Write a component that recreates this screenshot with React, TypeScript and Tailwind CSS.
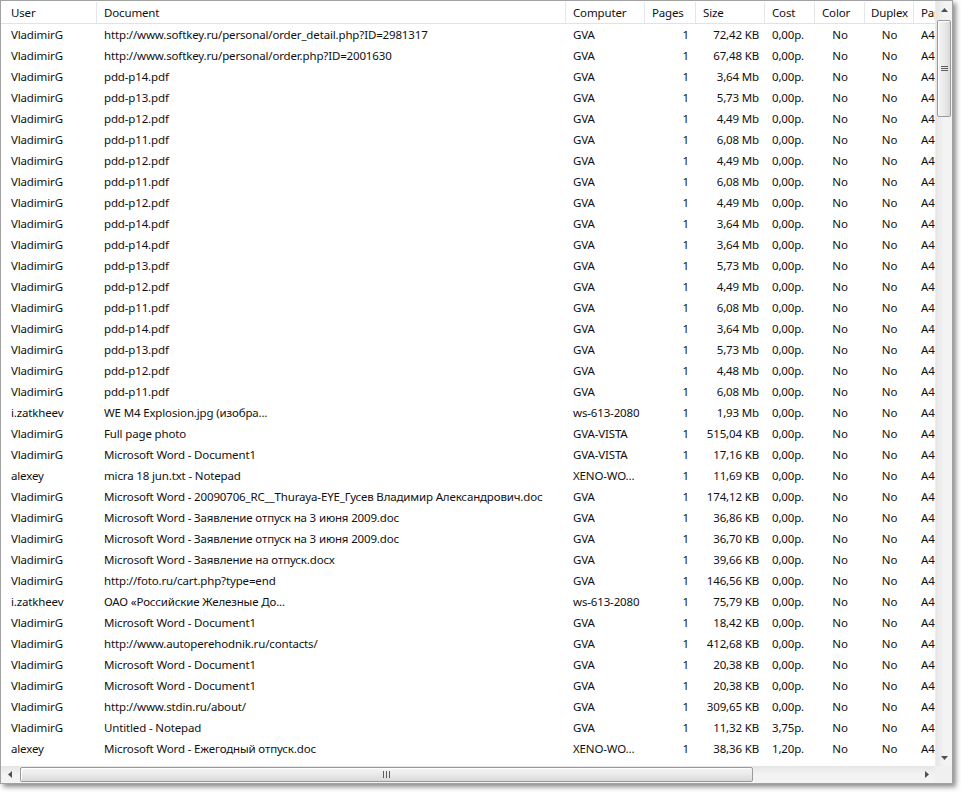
import React from "react";

type Row = [string, string, string, string, string, string];

const rows: Row[] = [
  ["VladimirG", "http://www.softkey.ru/personal/order_detail.php?ID=2981317", "GVA", "1", "72,42 KB", "0,00р."],
  ["VladimirG", "http://www.softkey.ru/personal/order.php?ID=2001630", "GVA", "1", "67,48 KB", "0,00р."],
  ["VladimirG", "pdd-p14.pdf", "GVA", "1", "3,64 Mb", "0,00р."],
  ["VladimirG", "pdd-p13.pdf", "GVA", "1", "5,73 Mb", "0,00р."],
  ["VladimirG", "pdd-p12.pdf", "GVA", "1", "4,49 Mb", "0,00р."],
  ["VladimirG", "pdd-p11.pdf", "GVA", "1", "6,08 Mb", "0,00р."],
  ["VladimirG", "pdd-p12.pdf", "GVA", "1", "4,49 Mb", "0,00р."],
  ["VladimirG", "pdd-p11.pdf", "GVA", "1", "6,08 Mb", "0,00р."],
  ["VladimirG", "pdd-p12.pdf", "GVA", "1", "4,49 Mb", "0,00р."],
  ["VladimirG", "pdd-p14.pdf", "GVA", "1", "3,64 Mb", "0,00р."],
  ["VladimirG", "pdd-p14.pdf", "GVA", "1", "3,64 Mb", "0,00р."],
  ["VladimirG", "pdd-p13.pdf", "GVA", "1", "5,73 Mb", "0,00р."],
  ["VladimirG", "pdd-p12.pdf", "GVA", "1", "4,49 Mb", "0,00р."],
  ["VladimirG", "pdd-p11.pdf", "GVA", "1", "6,08 Mb", "0,00р."],
  ["VladimirG", "pdd-p14.pdf", "GVA", "1", "3,64 Mb", "0,00р."],
  ["VladimirG", "pdd-p13.pdf", "GVA", "1", "5,73 Mb", "0,00р."],
  ["VladimirG", "pdd-p12.pdf", "GVA", "1", "4,48 Mb", "0,00р."],
  ["VladimirG", "pdd-p11.pdf", "GVA", "1", "6,08 Mb", "0,00р."],
  ["i.zatkheev", "WE M4 Explosion.jpg (изобра...", "ws-613-2080", "1", "1,93 Mb", "0,00р."],
  ["VladimirG", "Full page photo", "GVA-VISTA", "1", "515,04 KB", "0,00р."],
  ["VladimirG", "Microsoft Word - Document1", "GVA-VISTA", "1", "17,16 KB", "0,00р."],
  ["alexey", "micra 18 jun.txt - Notepad", "XENO-WO...", "1", "11,69 KB", "0,00р."],
  ["VladimirG", "Microsoft Word - 20090706_RC__Thuraya-EYE_Гусев Владимир Александрович.doc", "GVA", "1", "174,12 KB", "0,00р."],
  ["VladimirG", "Microsoft Word - Заявление отпуск на 3 июня 2009.doc", "GVA", "1", "36,86 KB", "0,00р."],
  ["VladimirG", "Microsoft Word - Заявление отпуск на 3 июня 2009.doc", "GVA", "1", "36,70 KB", "0,00р."],
  ["VladimirG", "Microsoft Word - Заявление на отпуск.docx", "GVA", "1", "39,66 KB", "0,00р."],
  ["VladimirG", "http://foto.ru/cart.php?type=end", "GVA", "1", "146,56 KB", "0,00р."],
  ["i.zatkheev", "ОАО «Российские Железные До...", "ws-613-2080", "1", "75,79 KB", "0,00р."],
  ["VladimirG", "Microsoft Word - Document1", "GVA", "1", "18,42 KB", "0,00р."],
  ["VladimirG", "http://www.autoperehodnik.ru/contacts/", "GVA", "1", "412,68 KB", "0,00р."],
  ["VladimirG", "Microsoft Word - Document1", "GVA", "1", "20,38 KB", "0,00р."],
  ["VladimirG", "Microsoft Word - Document1", "GVA", "1", "20,38 KB", "0,00р."],
  ["VladimirG", "http://www.stdin.ru/about/", "GVA", "1", "309,65 KB", "0,00р."],
  ["VladimirG", "Untitled - Notepad", "GVA", "1", "11,32 KB", "3,75р."],
  ["alexey", "Microsoft Word - Ежегодный отпуск.doc", "XENO-WO...", "1", "38,36 KB", "1,20р."],
  ["VladimirG", "Hiking - Mon 20 Jul 2009.pdf", "GVA", "1", "55,50 KB", "0,40р."],
];

function HeaderCell({ w, label, last }: { w: string; label: string; last?: boolean }) {
  return (
    <div
      className={`${w} shrink-0 h-full leading-[21px] overflow-hidden whitespace-nowrap ${
        last ? "" : "border-r border-[#e3e6ea]"
      }`}
    >
      {label}
    </div>
  );
}

function VScroll() {
  return (
    <div className="w-[17px] h-full flex flex-col bg-gradient-to-r from-[#e6e6e6] via-[#f3f3f3] to-[#f3f3f3] border-l border-[#ececec]">
      <div className="h-[17px] flex items-center justify-center">
        <svg width="7" height="4" viewBox="0 0 7 4">
          <path d="M0 4 L3.5 0 L7 4 Z" fill="#505050" />
        </svg>
      </div>
      <div className="h-[97px] mx-[1px] mt-[2px] rounded-[2px] border border-[#9a9a9a] bg-gradient-to-r from-[#f4f4f4] via-[#eaeaea] to-[#d9d9d9] flex flex-col items-center justify-center gap-[1px] shadow-[inset_1px_1px_0_#ffffff]">
        <div className="w-[7px] h-[1px] bg-[#5e5e5e]" />
        <div className="w-[7px] h-[1px] bg-[#5e5e5e]" />
        <div className="w-[7px] h-[1px] bg-[#5e5e5e]" />
      </div>
      <div className="flex-1" />
      <div className="h-[17px] flex items-center justify-center">
        <svg width="7" height="4" viewBox="0 0 7 4">
          <path d="M0 0 L7 0 L3.5 4 Z" fill="#505050" />
        </svg>
      </div>
    </div>
  );
}

function HScroll() {
  return (
    <div className="h-[17px] flex bg-gradient-to-b from-[#e6e6e6] via-[#f3f3f3] to-[#f3f3f3]">
      <div className="w-[17px] h-full flex items-center justify-center">
        <svg width="4" height="7" viewBox="0 0 4 7">
          <path d="M4 0 L4 7 L0 3.5 Z" fill="#505050" />
        </svg>
      </div>
      <div className="w-[733px] my-[1px] ml-[2px] rounded-[2px] border border-[#9a9a9a] bg-gradient-to-b from-[#f4f4f4] via-[#eaeaea] to-[#d9d9d9] flex items-center justify-center gap-[1px] shadow-[inset_1px_1px_0_#ffffff]">
        <div className="w-[1px] h-[7px] bg-[#5e5e5e]" />
        <div className="w-[1px] h-[7px] bg-[#5e5e5e] ml-[1px]" />
        <div className="w-[1px] h-[7px] bg-[#5e5e5e] ml-[1px]" />
      </div>
      <div className="flex-1" />
      <div className="w-[17px] h-full flex items-center justify-center">
        <svg width="4" height="7" viewBox="0 0 4 7">
          <path d="M0 0 L4 3.5 L0 7 Z" fill="#505050" />
        </svg>
      </div>
      <div className="w-[17px] h-full bg-[#f0f0f0]" />
    </div>
  );
}

export default function App() {
  return (
    <div
      className="w-[961px] h-[792px] bg-white text-[11.5px] tracking-[-0.15px] text-[#111111] overflow-hidden"
      style={{ fontFamily: '"Noto Sans", "Open Sans", sans-serif' }}
    >
      <div className="w-[953px] h-[784px] border border-[#a2a2a2] bg-white flex flex-col shadow-[3px_3px_5px_rgba(0,0,0,0.45)]">
        <div className="flex-1 flex min-h-0">
          <div className="flex-1 min-w-0 flex flex-col overflow-hidden">
            <div className="h-[23px] flex shrink-0 border-b border-[#dfe2e6] pt-[1px]">
              <HeaderCell w="w-[96px] pl-[10px]" label="User" />
              <HeaderCell w="w-[469px] pl-[7px]" label="Document" />
              <HeaderCell w="w-[79px] pl-[7px]" label="Computer" />
              <HeaderCell w="w-[51px] pl-[7px]" label="Pages" />
              <HeaderCell w="w-[69px] pl-[7px]" label="Size" />
              <HeaderCell w="w-[50px] pl-[7px]" label="Cost" />
              <HeaderCell w="w-[50px] pl-[7px]" label="Color" />
              <HeaderCell w="w-[49px] pl-[6px]" label="Duplex" />
              <HeaderCell w="w-[60px] pl-[7px]" label="Paper" last />
            </div>
            <div className="flex-1 overflow-hidden">
              {rows.map((r, i) => (
                <div key={i} className="h-[21px] flex whitespace-nowrap leading-[21px]">
                  <div className="w-[96px] shrink-0 pl-[10px] overflow-hidden">{r[0]}</div>
                  <div className="w-[469px] shrink-0 pl-[7px] overflow-hidden">{r[1]}</div>
                  <div className="w-[79px] shrink-0 pl-[7px] overflow-hidden">{r[2]}</div>
                  <div className="w-[51px] shrink-0 pr-[7px] text-right">{r[3]}</div>
                  <div className="w-[69px] shrink-0 pr-[6px] text-right">{r[4]}</div>
                  <div className="w-[50px] shrink-0 pl-[7px]">{r[5]}</div>
                  <div className="w-[50px] shrink-0 text-center">No</div>
                  <div className="w-[49px] shrink-0 text-center">No</div>
                  <div className="w-[60px] shrink-0 pl-[7px]">A4</div>
                </div>
              ))}
            </div>
          </div>
          <VScroll />
        </div>
        <HScroll />
      </div>
    </div>
  );
}
